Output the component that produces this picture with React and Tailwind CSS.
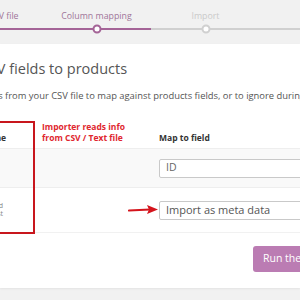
import React from "react";

export default function App() {
  const steps = [
    { label: "Upload CSV file", done: true },
    { label: "Column mapping", done: true, active: true },
    { label: "Import", done: false },
    { label: "Done!", done: false },
  ];
  return (
    <div className="w-[300px] h-[300px] overflow-hidden bg-[#f1f1f1] relative font-['Open_Sans',sans-serif]">
      {/* steps */}
      <div className="h-[44px] overflow-hidden">
        <div className="flex -ml-[67px] pt-[9px] w-[500px]">
          {steps.map((s, i) => (
            <div key={i} className="w-[109px] shrink-0 flex flex-col items-center">
              <div
                className={
                  "text-[8.8px] leading-[14px] whitespace-nowrap " +
                  (s.done ? "text-[#a07599]" : "text-[#cacaca]")
                }
              >
                {s.label}
              </div>
              <div
                className={
                  "relative mt-[4.5px] w-full h-[2px] " +
                  (s.done ? "bg-[#a46497]" : "bg-[#d0d0d0]")
                }
              >
                {i > 0 && (
                  <div
                    className={
                      "absolute left-1/2 top-1/2 -translate-x-1/2 -translate-y-1/2 w-[9px] h-[9px] rounded-full bg-white border-2 " +
                      (s.done ? "border-[#a46497]" : "border-[#d0d0d0]")
                    }
                  />
                )}
              </div>
            </div>
          ))}
        </div>
      </div>

      {/* card */}
      <div className="bg-white h-[244px] relative shadow-[0_1px_2px_rgba(0,0,0,0.06)]">
        <div className="pt-[15px]">
          <div className="-ml-[54px] text-[14.5px] leading-[20px] text-[#555] whitespace-nowrap">
            Map CSV fields to products
          </div>
          <div className="-ml-[49px] mt-[10px] text-[9.4px] leading-[14px] text-[#555] whitespace-nowrap">
            Select fields from your CSV file to map against products fields, or to ignore during import.
          </div>
        </div>

        {/* table */}
        <div className="mt-[15px] text-[#333]">
          {/* header */}
          <div className="flex h-[31px] items-end pb-[4px] border-b border-[#eee]">
            <div className="w-[159px] shrink-0">
              <div className="-ml-[54px] w-[60px] text-right text-[8.5px] leading-[12px] font-bold whitespace-nowrap">
                Column name
              </div>
            </div>
            <div className="text-[8.5px] leading-[12px] font-bold whitespace-nowrap">Map to field</div>
          </div>
          {/* row 1 */}
          <div className="flex h-[39px] items-center bg-[#f9f9f9] border-b border-[#eee]">
            <div className="w-[159px] shrink-0" />
            <div className="w-[160px] shrink-0 h-[19px] border border-[#c9c9c9] rounded-[2px] bg-white flex items-center pl-[6px] text-[10.5px] text-[#666]">
              ID
            </div>
          </div>
          {/* row 2 */}
          <div className="flex h-[45px] items-center border-b border-[#f1f1f1]">
            <div className="w-[159px] shrink-0">
              <div className="-ml-[48px] w-[51px] text-right text-[7px] leading-[8px] text-[#888] whitespace-nowrap">
                <div>Meta: brand</div>
                <div>Sample: test</div>
              </div>
            </div>
            <div className="w-[160px] shrink-0 h-[19px] border border-[#c9c9c9] rounded-[2px] bg-white flex items-center pl-[6px] text-[11px] text-[#555]">
              Import as meta data
            </div>
          </div>
        </div>

        {/* button row */}
        <div className="flex pt-[13px] pl-[253px]">
          <div className="h-[26px] px-[10px] rounded-[3px] bg-[#bb7cb3] text-white text-[10.5px] flex items-center whitespace-nowrap shrink-0">
            Run the importer
          </div>
        </div>

        {/* annotations */}
        <div className="absolute left-[-10px] top-[77px] w-[45px] h-[113px] border-2 border-[#c8161d]" />
        <div className="absolute left-[42px] top-[77px] text-[8.5px] leading-[11px] font-bold text-[#e0262e] whitespace-nowrap">
          <div>Importer reads info</div>
          <div>from CSV / Text file</div>
        </div>
        <svg className="absolute left-[128px] top-[160px]" width="32" height="12" viewBox="0 0 32 12">
          <line x1="1" y1="6.5" x2="22" y2="5.5" stroke="#d4141c" strokeWidth="2.2" strokeLinecap="round" />
          <polygon points="19,1 30,5.5 19,10 21,5.5" fill="#d4141c" />
        </svg>
      </div>
    </div>
  );
}
